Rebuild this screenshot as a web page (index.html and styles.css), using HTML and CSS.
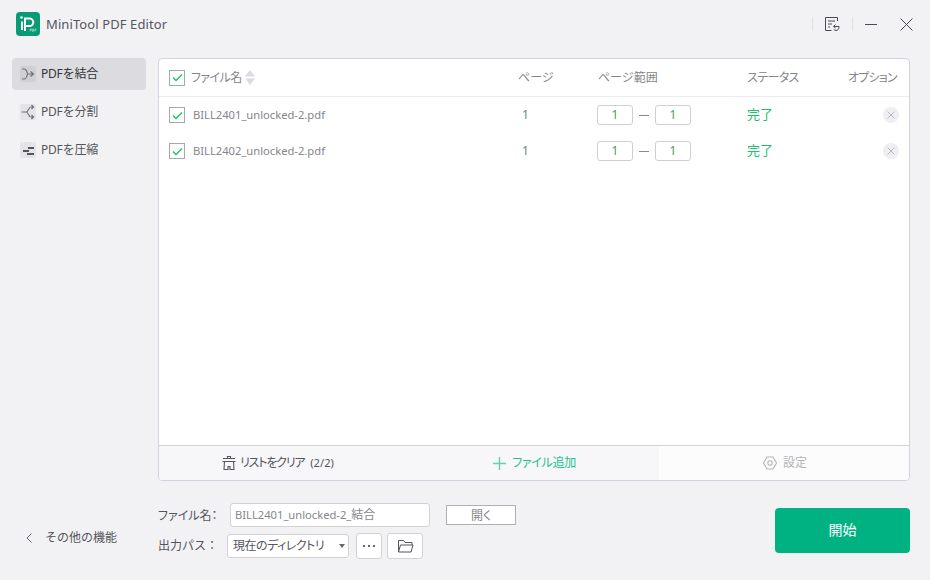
FILE: index.html
```html
<!DOCTYPE html>
<html lang="ja">
<head>
<meta charset="utf-8">
<title>MiniTool PDF Editor</title>
<link rel="stylesheet" href="styles.css">
</head>
<body>
<div class="app">
  <header class="titlebar">
    <div class="brand">
      <svg class="logo" width="24" height="24" viewBox="0 0 24 24"><rect width="24" height="24" rx="4" fill="#0b9b74"/><path d="M6 9.500V18M9 19V6.500h4.500a3.800 3.800 0 0 1 0 7.600H9" fill="none" stroke="#fff" stroke-width="2"/><circle cx="5.500" cy="5.500" r="1.300" fill="#fff"/><rect x="13" y="15.500" width="9" height="5" fill="#0b9b74"/><path d="M14 17v2.500M14 17h1.500v1.200H14M16.500 17v2.500h1V17h-1M20.500 17h-1.700v2.500M18.800 18.200h1.500" stroke="#cfeee5" stroke-width=".5" fill="none"/></svg>
      <span class="app-name">MiniTool PDF Editor</span>
    </div>
    <div class="win-controls">
      <span class="sep"></span>
      <svg class="ctl-history" width="16" height="16" viewBox="0 0 16 16" fill="none" stroke="#4a4a52" stroke-width="1"><path d="M13.500 5V1.500h-12v13h6M4 5h7M4 8h4M4 11h2"/><path d="M9.500 10.500h5.500V11c0 2-1.300 3.500-3 3.500-1 0-1.800-.4-2.300-1.200M11.500 8.500l-2 2 2 1.500"/></svg>
      <span class="sep"></span>
      <svg class="ctl-min" width="12" height="12" viewBox="0 0 12 12" stroke="#4a4a52" stroke-width="1"><path d="M0 6.500h12"/></svg>
      <svg class="ctl-close" width="13" height="13" viewBox="0 0 13 13" stroke="#4a4a52" stroke-width="1"><path d="M.5.500l12 12M12.500.500l-12 12"/></svg>
    </div>
  </header>
  <div class="workspace">
    <nav class="sidebar">
      <a class="nav-item active">
        <span class="nav-icon"><svg width="16" height="16" viewBox="0 0 16 16" fill="none" stroke="#707078" stroke-width="1.200"><path d="M2 3h2c2.500 0 3 2.500 3.500 5-.5 2.500-1 5-3.500 5H2M7.500 8H13M10.500 5.500 13.500 8l-3 2.500"/></svg></span>
        <span class="nav-text">PDFを結合</span>
      </a>
      <a class="nav-item">
        <span class="nav-icon"><svg width="16" height="16" viewBox="0 0 16 16" fill="none" stroke="#707078" stroke-width="1.200"><path d="M1.500 8H6M13.500 3H11C8.500 3 8.500 8 6 8c2.500 0 2.500 5 5 5h2.500M11.500 1 13.500 3l-2 2M11.500 11l2 2-2 2"/></svg></span>
        <span class="nav-text">PDFを分割</span>
      </a>
      <a class="nav-item">
        <span class="nav-icon"><svg width="16" height="16" viewBox="0 0 16 16" fill="#55555c"><path d="M8 5h6v2H8zM3 8h6v2H3zM7 11h7v2H7z"/></svg></span>
        <span class="nav-text">PDFを圧縮</span>
      </a>
      <a class="more">
        <svg width="8" height="12" viewBox="0 0 8 12" fill="none" stroke="#66666e" stroke-width="1"><path d="M6.500 1.500 2 6l4.500 4.500"/></svg>
        <span>その他の機能</span>
      </a>
    </nav>
    <main class="content">
      <section class="panel">
        <div class="row head">
          <span class="file"><span class="check"><svg width="11" height="9" viewBox="0 0 11 9" fill="none" stroke="#22c06a" stroke-width="1.500"><path d="M1 4.500 4 7.500 10 1.500"/></svg></span><span class="head-name kana">ファイル名</span>
            <svg class="sort" width="10" height="15" viewBox="0 0 10 15" fill="#dcdce0"><path d="M5 0 10 6.500H0zM0 8.500h10L5 15z"/></svg></span>
          <span class="col-page kana">ページ</span>
          <span class="col-range">ページ範囲</span>
          <span class="col-status kana">ステータス</span>
          <span class="col-option kana">オプション</span>
        </div>
        <div class="list">
          <div class="row item">
            <span class="file"><span class="check"><svg width="11" height="9" viewBox="0 0 11 9" fill="none" stroke="#22c06a" stroke-width="1.500"><path d="M1 4.500 4 7.500 10 1.500"/></svg></span><span class="name latin">BILL2401_unlocked-2.pdf</span></span>
            <span class="pages">1</span>
            <span class="range"><span class="num">1</span><span class="dash"></span><span class="num">1</span></span>
            <span class="done">完了</span>
            <span class="opt"><span class="remove"><svg width="8" height="8" viewBox="0 0 8 8" stroke="#b8b8c2" stroke-width="1"><path d="M.5.500l7 7M7.500.500l-7 7"/></svg></span></span>
          </div>
          <div class="row item">
            <span class="file"><span class="check"><svg width="11" height="9" viewBox="0 0 11 9" fill="none" stroke="#22c06a" stroke-width="1.500"><path d="M1 4.500 4 7.500 10 1.500"/></svg></span><span class="name latin">BILL2402_unlocked-2.pdf</span></span>
            <span class="pages">1</span>
            <span class="range"><span class="num">1</span><span class="dash"></span><span class="num">1</span></span>
            <span class="done">完了</span>
            <span class="opt"><span class="remove"><svg width="8" height="8" viewBox="0 0 8 8" stroke="#b8b8c2" stroke-width="1"><path d="M.5.500l7 7M7.500.500l-7 7"/></svg></span></span>
          </div>
        </div>
        <div class="toolbar">
          <button class="tool clear"><svg width="14" height="16" viewBox="0 0 14 16" fill="none" stroke="#55555c" stroke-width="1.100"><path d="M5.500 3.500V1.500h3v2M1 3.500h12M.5 6.500h13M2.500 6.500l-.5 8h4v-3h2v3h4l-.5-8"/></svg><span class="clear-text kana">リストをクリア <span class="latin count">(2/2)</span></span></button>
          <button class="tool add"><svg width="13" height="13" viewBox="0 0 13 13" stroke="#5fd3ae" stroke-width="1.400"><path d="M6.500 0v13M0 6.500h13"/></svg><span class="add-text kana">ファイル追加</span></button>
          <button class="tool settings"><svg width="14" height="14" viewBox="0 0 14 14" fill="none" stroke="#b4b4b8" stroke-width="1.100"><path d="M4 1h6l3.500 6L10 13H4L.5 7z"/><circle cx="7" cy="7" r="2.200"/></svg><span>設定</span></button>
        </div>
      </section>
      <section class="output">
        <div class="form">
          <div class="form-row first">
            <label class="label kana">ファイル名：</label>
            <span class="text-input"><span class="latin">BILL2401_unlocked-2_</span>結合</span>
            <button class="open kana">開く</button>
          </div>
          <div class="form-row second">
            <label class="label">出力パス：</label>
            <span class="select"><span class="select-text kana">現在のディレクトリ</span><svg width="6" height="4" viewBox="0 0 6 4" fill="#66666e"><path d="M0 0h6L3 4z"/></svg></span>
            <button class="small-btn dots"><svg width="12" height="2" viewBox="0 0 12 2" fill="#66666e"><rect width="2" height="2"/><rect x="5" width="2" height="2"/><rect x="10" width="2" height="2"/></svg></button>
            <button class="small-btn folder"><svg width="17" height="14" viewBox="0 0 17 14" fill="none" stroke="#55555c" stroke-width="1"><path d="M1.500 13V1.500h5l1.500 2h7V6M1.500 13h12.500L16 6H3.500z"/></svg></button>
          </div>
        </div>
        <button class="start">開始</button>
      </section>
    </main>
  </div>
</div>
</body>
</html>
```
FILE: styles.css
```css
* { box-sizing: border-box; }
html, body { margin: 0; padding: 0; }
body {
  width: 930px;
  height: 580px;
  overflow: hidden;
  font-family: "Noto Sans", "Noto Sans CJK JP", sans-serif;
  font-size: 12px;
  line-height: 16px;
  color: #6e6e76;
  background: #f2f2f5;
}
button { font: inherit; color: inherit; padding: 0; background: none; border: 0; }
.kana { font-feature-settings: "palt"; }
.latin { font-size: 11.2px; letter-spacing: 0; }
.app { display: flex; flex-direction: column; width: 930px; height: 580px; }
.titlebar { display: flex; justify-content: space-between; align-items: center; height: 50px; padding: 0 17px 2px 16px; flex: none; }
.brand { display: flex; align-items: center; gap: 6px; }
.app-name { font-size: 13px; color: #55555c; letter-spacing: .1px; }
.win-controls { display: flex; align-items: center; }
.sep { width: 1px; height: 14px; background: #e2e2e6; }
.ctl-history { margin: 0 12px 0 11px; }
.ctl-min { margin: 0 23px 0 12px; }
.workspace { display: flex; flex: 1; min-height: 0; padding-top: 8px; }
.sidebar { width: 134px; margin: 0 12px; flex: none; display: flex; flex-direction: column; gap: 6px; }
.nav-item { display: flex; align-items: center; gap: 5px; height: 32px; padding-left: 8px; border-radius: 4px; color: #55555c; }
.nav-item.active { background: #dcdce0; color: #333338; }
.nav-text { margin-top: -1px; letter-spacing: -.2px; }
.nav-icon { width: 16px; height: 16px; background: #e4e4e8; border-radius: 2px; display: flex; }
.nav-item.active .nav-icon { background: #d0d0d4; }
.more { display: flex; align-items: center; gap: 12px; margin-top: auto; margin-bottom: 34px; padding-left: 13px; color: #55555c; }
.content { width: 752px; display: flex; flex-direction: column; flex: none; }
.panel { height: 423px; flex: none; background: #fff; border: 1px solid #d2d2e0; border-radius: 4px; display: flex; flex-direction: column; overflow: hidden; }
.row { display: grid; grid-template-columns: 349px 80px 149px 102px 1fr; align-items: center; padding-left: 10px; }
.head { height: 38px; border-bottom: 1px solid #ececf0; color: #85858c; flex: none; }
.list { flex: 1; }
.item { height: 36px; }
.file { display: flex; align-items: center; }
.check { width: 16px; height: 16px; border: 1px solid #a8a8a8; background: #fff; display: flex; align-items: center; justify-content: center; flex: none; }
.head-name { margin-left: 6px; letter-spacing: -.6px; }
.sort { margin-left: 3px; }
.name { margin-left: 8px; color: #85858c; margin-top: -1px; }
.pages { padding-left: 4px; color: #6a8a70; margin-top: -1px; }
.col-status { letter-spacing: -.6px; }
.col-option { white-space: nowrap; margin-left: -1px; letter-spacing: -.8px; }
.range { display: flex; align-items: center; margin-left: -1px; }
.num { width: 36px; height: 20px; border: 1px solid #cfcfcf; border-radius: 3px; text-align: center; line-height: 18px; color: #4f9a55; background: #fff; }
.dash { width: 10px; height: 1px; background: #88888e; margin: 0 6px; }
.done { color: #22c06a; font-size: 13px; margin-top: -3px; }
.opt { display: flex; justify-content: flex-end; padding-right: 10px; }
.remove { width: 16px; height: 16px; border-radius: 50%; background: #eeeef3; display: flex; align-items: center; justify-content: center; }
.toolbar { display: grid; grid-template-columns: 250px 250px 1fr; height: 35px; border-top: 1px solid #d2d2e0; flex: none; }
.tool { display: flex; align-items: center; justify-content: center; gap: 5px; background: #f7f7fa; }
.tool.clear { color: #55555c; gap: 4px; padding-right: 12px; }
.clear-text { letter-spacing: -1.2px; }
.count { margin-left: 4px; }
.tool.add { color: #22c08c; gap: 6px; padding-left: 1px; }
.add-text { letter-spacing: -.3px; }
.tool.settings { background: #fcfcfd; color: #b4b4b8; padding-left: 2px; gap: 6px; }
.output { display: flex; justify-content: space-between; flex: 1; margin-left: -1px; padding-top: 22px; }
.form { display: flex; flex-direction: column; gap: 6px; }
.form-row { display: flex; align-items: center; color: #55555c; }
.first { height: 24px; }
.second { height: 26px; }
.first .label { width: 73px; padding: 1px 0 0 1px; }
.second .label { width: 70px; padding-left: 1px; }
.text-input { width: 200px; height: 24px; padding-left: 4px; background: #fff; border: 1px solid #d2d2d6; border-radius: 3px; line-height: 22px; color: #85858c; white-space: nowrap; }
.open { width: 70px; height: 20px; margin-left: 16px; padding-top: 1px; background: #fff; border: 1px solid #b0b0b0; color: #85858c; }
.select { width: 122px; height: 24px; padding: 0 3px 0 5px; background: #fff; border: 1px solid #d2d2d6; border-radius: 3px; display: flex; align-items: center; justify-content: space-between; white-space: nowrap; }
.select-text { letter-spacing: -.5px; margin-top: -1px; }
.small-btn { height: 26px; background: #fff; border: 1px solid #d2d2d6; border-radius: 3px; display: flex; align-items: center; justify-content: center; }
.dots { width: 26px; margin-left: 7px; }
.folder { width: 36px; margin-left: 5px; }
.start { width: 135px; height: 45px; margin-top: 5px; padding-bottom: 1px; background: #00b282; color: #fff; font-size: 14px; border-radius: 4px; }
```
